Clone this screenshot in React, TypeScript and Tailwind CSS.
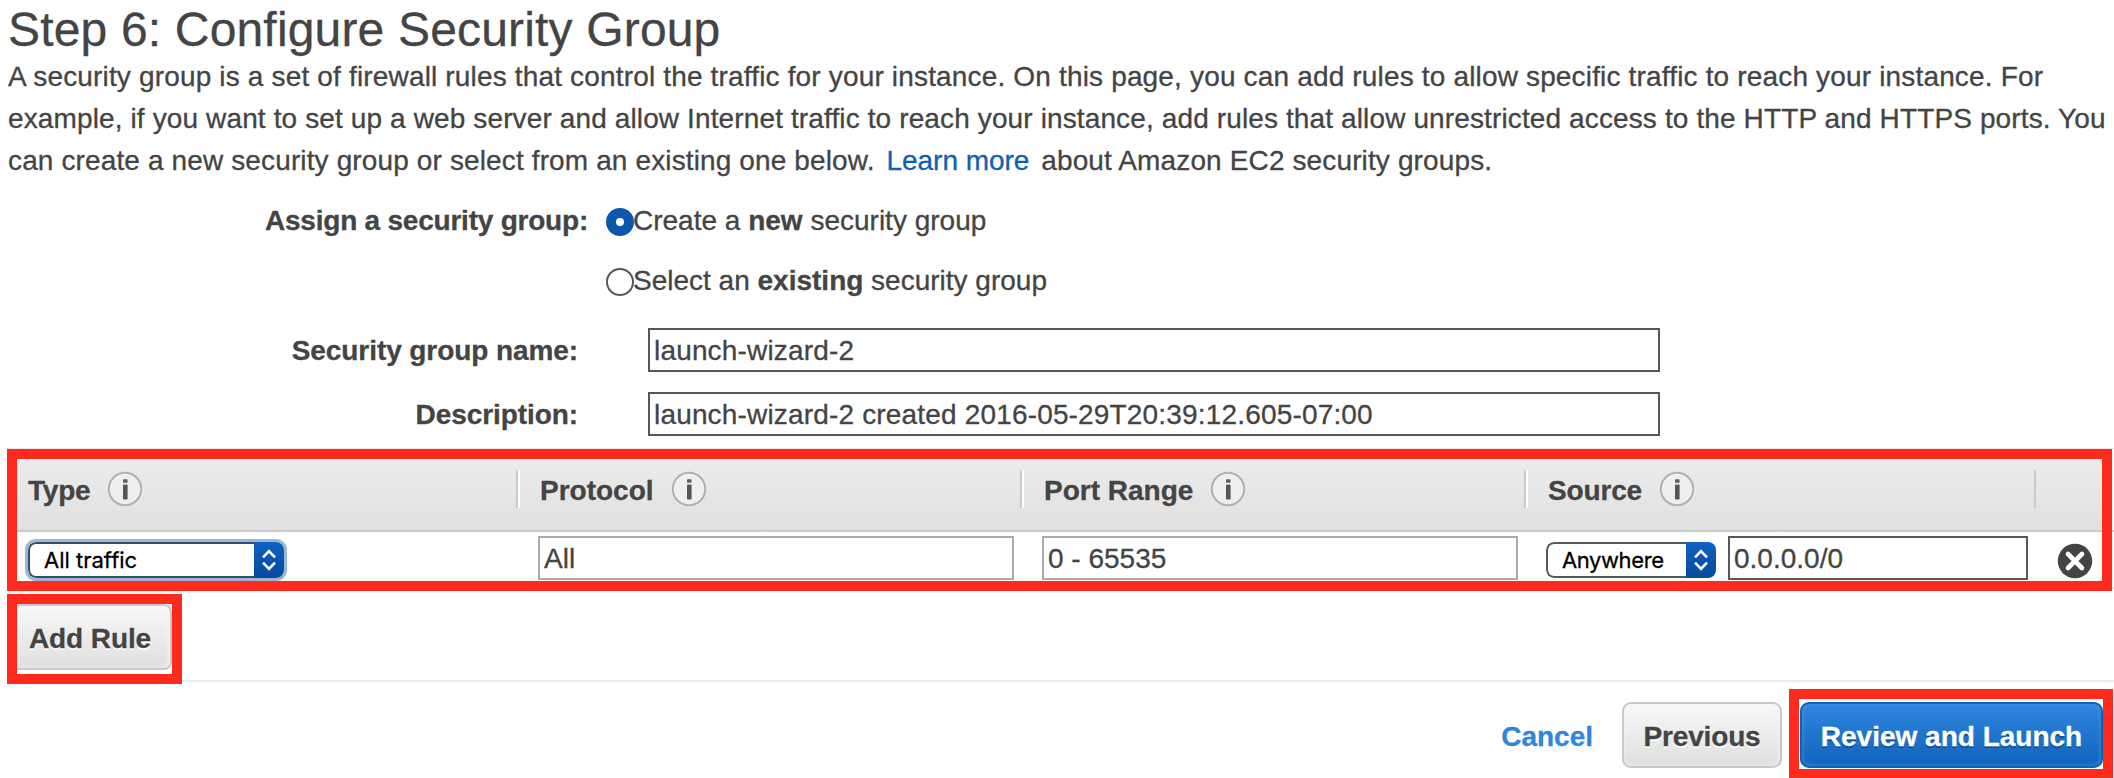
import React from "react";

function InfoIcon({ className = "" }: { className?: string }) {
  return (
    <svg className={`h-9 w-9 shrink-0 ${className}`} viewBox="0 0 36 36" aria-hidden="true">
      <circle cx="18" cy="18" r="16.2" fill="#efefef" stroke="#b0b0b0" strokeWidth="2" />
      <rect x="16" y="8.2" width="4.6" height="3.6" rx="0.8" fill="#606060" />
      <rect x="16" y="13.6" width="4.6" height="15" rx="0.8" fill="#555555" />
    </svg>
  );
}

function Stepper() {
  return (
    <span className="flex w-[30px] shrink-0 items-center justify-center bg-linear-to-b from-[#0f62c4] to-[#07489a]">
      <svg className="h-6 w-5" viewBox="0 0 20 24" fill="none" stroke="#ffffff" strokeWidth="2.6" aria-hidden="true">
        <path d="M4 9.4 L10 3.2 L16 9.4" />
        <path d="M4 14.6 L10 20.8 L16 14.6" />
      </svg>
    </span>
  );
}

function Picker({ label, className }: { label: string; className: string }) {
  return (
    <div className={`flex h-9 shrink-0 overflow-hidden rounded-lg ${className}`}>
      <span className="flex flex-1 items-center rounded-l-lg border-y-2 border-l-2 border-inherit pb-px pl-[14px] font-['Inter',sans-serif] text-[22px] leading-none text-black">
        {label}
      </span>
      <Stepper />
    </div>
  );
}

function Field({ value, className }: { value: string; className: string }) {
  return (
    <input
      readOnly
      value={value}
      className={`block h-11 shrink-0 border-2 bg-white px-1 pt-0.5 leading-[38px] outline-none ${className}`}
    />
  );
}

function HeaderCell({ title, className }: { title: string; className: string }) {
  return (
    <div className={`flex shrink-0 items-center text-[28px] font-bold ${className}`}>
      <span className="pt-0.5 leading-[38px]">{title}</span>
      <InfoIcon className="-mt-0.5 ml-[17px]" />
    </div>
  );
}

function Divider() {
  return <span className="h-[38px] w-1 shrink-0 border-r-2 border-l-2 border-l-[#cacaca] border-r-white" />;
}

export default function App() {
  return (
    <main className="h-[778px] w-[2114px] overflow-hidden bg-white font-['Liberation_Sans',Arial,sans-serif] text-[28px] text-[#444444] [-webkit-text-stroke:0.3px]">
      <h1 className="h-14 pt-[3px] pl-2 text-[48px] leading-[54px] tracking-[0.17px]">Step 6: Configure Security Group</h1>
      <div className="pl-2 leading-[42px] whitespace-nowrap">
        <p className="tracking-[0.165px]">
          A security group is a set of firewall rules that control the traffic for your instance. On this page, you can
          add rules to allow specific traffic to reach your instance. For
        </p>
        <p className="tracking-[0.125px]">
          example, if you want to set up a web server and allow Internet traffic to reach your instance, add rules that
          allow unrestricted access to the HTTP and HTTPS ports. You
        </p>
        <p className="tracking-[0.13px]">
          can create a new security group or select from an existing one below.
          <a className="ml-3 tracking-[-0.05px] text-[#0f5fb5]">Learn more</a>
          <span className="ml-3">about Amazon EC2 security groups.</span>
        </p>
      </div>

      <section className="mt-[18px] leading-[42px]">
        <div className="flex h-[60px]">
          <div className="w-[590px] pr-0.5 text-right font-bold tracking-[-0.22px]">Assign a security group:</div>
          <span className="mt-2 ml-4 flex h-7 w-7 items-center justify-center rounded-full bg-[#0b57ae]">
            <span className="h-2 w-2 rounded-full bg-white" />
          </span>
          <span className="-ml-px">
            Create a <b>new</b> security group
          </span>
        </div>
        <div className="flex h-[68px]">
          <span className="mt-2 ml-[606px] h-7 w-7 rounded-full border-2 border-[#58585a] bg-white" />
          <span className="-ml-px">
            Select an <b>existing</b> security group
          </span>
        </div>
        <div className="flex h-16 leading-[46px]">
          <label className="w-[580px] pr-0.5 text-right font-bold tracking-[-0.08px]">Security group name:</label>
          <Field value="launch-wizard-2" className="ml-[68px] w-[1012px] border-[#58585a] tracking-[0.17px]" />
        </div>
        <div className="flex h-14 leading-[46px]">
          <label className="w-[580px] pr-0.5 text-right font-bold tracking-[-0.08px]">Description:</label>
          <Field
            value="launch-wizard-2 created 2016-05-29T20:39:12.605-07:00"
            className="ml-[68px] w-[1012px] border-[#58585a] tracking-[0.17px]"
          />
        </div>
      </section>

      <section className="ml-[7px] flex h-[143px] border-t border-[#e6e6e6]">
        <div className="h-[142px] w-[2105px] border-10 border-[#fd2b1e]">
          <div className="flex h-[73px] items-start border-b-2 border-[#cccccc] bg-linear-to-b from-[#ececec] to-[#e0e0e0] pt-[11px]">
            <HeaderCell title="Type" className="w-[499px] pl-[11px] tracking-[-0.2px]" />
            <Divider />
            <HeaderCell title="Protocol" className="w-[500px] pl-5" />
            <Divider />
            <HeaderCell title="Port Range" className="w-[500px] pl-5" />
            <Divider />
            <HeaderCell title="Source" className="w-[506px] pl-5 tracking-[-0.15px]" />
            <span className="h-[38px] w-0.5 bg-[#cacaca]" />
          </div>
          <div className="flex pt-1">
            <Picker
              label="All traffic"
              className="mt-1.5 ml-[11px] w-64 border-[#31506f] shadow-[0_0_0_3px_#9bb7d1]"
            />
            <Field value="All" className="ml-[254px] w-[476px] border-[#a9a9a9]" />
            <Field value="0 - 65535" className="ml-7 w-[476px] border-[#a9a9a9]" />
            <Picker label="Anywhere" className="mt-1.5 ml-7 w-[170px] border-[#58585a] tracking-[-0.4px]" />
            <Field value="0.0.0.0/0" className="ml-3 w-[300px] border-[#58585a]" />
            <svg className="mt-[7px] ml-[29px] h-9 w-9" viewBox="0 0 36 36" aria-hidden="true">
              <circle cx="18" cy="18" r="17.2" fill="#444444" />
              <path d="M11 11 L25 25 M25 11 L11 25" stroke="#ffffff" strokeWidth="4.6" strokeLinecap="round" />
            </svg>
          </div>
        </div>
        <div className="mt-[81px] h-[59px] w-0.5 border-t-2 border-b-2 border-t-[#cccccc] border-b-[#e6e6e6]" />
      </section>

      <section className="mt-[3px] ml-[7px] flex h-[90px]">
        <div className="h-[90px] w-[175px] border-10 border-[#fd2b1e]">
          <button className="block h-[66px] w-[155px] rounded-r-lg border-2 border-l-0 border-[#c8c8c8] bg-linear-to-b from-[#f8f8f8] to-[#dfdfdf] pt-[3px] pl-3 text-left font-bold tracking-[-0.1px] shadow-[inset_-2px_0_4px_#f4f4f4] [text-shadow:0_2px_0_#ffffff]">
            Add Rule
          </button>
        </div>
        <div className="mt-[86px] h-0.5 flex-1 bg-[#ebebeb]" />
      </section>

      <footer className="mt-[5px] flex h-[89px] justify-end pr-px font-bold">
        <a className="mt-[13px] mr-[29px] pt-0.5 leading-[66px] text-[#2f86dc]">Cancel</a>
        <button className="mt-[13px] mr-[7px] h-[66px] w-40 rounded-[9px] border-2 border-[#c8c8c8] bg-linear-to-b from-[#f8f8f8] to-[#dfdfdf] pt-[3px] tracking-[-0.15px] shadow-[inset_0_0_4px_#f4f4f4] [text-shadow:0_2px_0_#ffffff]">
          Previous
        </button>
        <div className="h-[89px] w-[324px] border-10 border-b-9 border-[#fd2b1e] pt-[3px] pl-px">
          <button className="block h-[66px] w-[303px] rounded-[9px] border-2 border-[#1060b8] bg-linear-to-b from-[#2f86de] to-[#0f63ba] pt-[3px] text-white shadow-[inset_0_0_5px_#4a94dc] [text-shadow:0_2px_0_#0d4f96]">
            Review and Launch
          </button>
        </div>
      </footer>
    </main>
  );
}
